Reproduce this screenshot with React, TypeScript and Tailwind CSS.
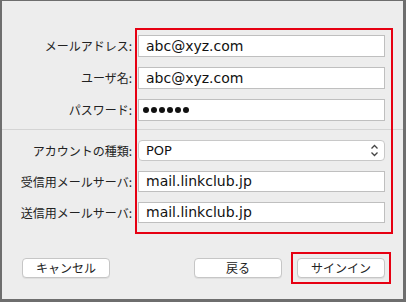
import type { ReactNode } from 'react';

const jp = { fontFamily: '"Noto Sans CJK JP", "Noto Sans", sans-serif' };
const latin = { fontFamily: '"DejaVu Sans", "Noto Sans", sans-serif' };

function Row({ label, children, className = '' }: { label: string; children: ReactNode; className?: string }) {
    return (
        <div className={`flex items-center gap-[6px] ${className}`}>
            <div className="w-[130px] text-right text-[12px] text-[#222] leading-none" style={jp}>
                {label}:
            </div>
            {children}
        </div>
    );
}

function TextField({ value, h = 'h-[22px]' }: { value: string; h?: string }) {
    return (
        <div
            className={`w-[247px] ${h} bg-white border border-[#bfbfbf] flex items-center pl-[7px] text-[14px] text-[#111]`}
            style={latin}
        >
            {value}
        </div>
    );
}

function Button({ label }: { label: string }) {
    return (
        <button
            className="w-[88px] h-[20px] bg-white border border-[#c6c6c6] rounded-[4px] shadow-[0_1px_0_rgba(0,0,0,0.06)] text-[12px] text-[#222] leading-none flex items-center justify-center"
            style={jp}
        >
            {label}
        </button>
    );
}

export default function App() {
    return (
        <div className="relative w-[406px] h-[302px] bg-[#ededed] border-[#6e6e6e] border-l-2 border-t border-r-[3px] border-b-[3px] flex flex-col">
            {/* fields */}
            <div className="flex flex-col pt-[34px]">
                <Row label="メールアドレス">
                    <TextField value="abc@xyz.com" />
                </Row>
                <Row label="ユーザ名" className="mt-[10px]">
                    <TextField value="abc@xyz.com" />
                </Row>
                <Row label="パスワード" className="mt-[10px]">
                    <div className="w-[247px] h-[22px] bg-white border border-[#bfbfbf] flex items-center pl-[4px] gap-[2px]">
                        {[0, 1, 2, 3, 4, 5].map((i) => (
                            <span key={i} className="w-[6px] h-[6px] rounded-full bg-[#111]" />
                        ))}
                    </div>
                </Row>

                <div className="mt-[8px] h-px bg-[#d4d4d4]" />

                <Row label="アカウントの種類" className="mt-[10px]">
                    <div
                        className="w-[247px] h-[21px] bg-white border border-[#c8c8c8] rounded-[4px] flex items-center justify-between pl-[7px] pr-[5px] text-[13px] text-[#111]"
                        style={latin}
                    >
                        <span>POP</span>
                        <svg width="9" height="13" viewBox="0 0 9 13" fill="none" stroke="#444" strokeWidth="1.3">
                            <path d="M1.5 4.5 L4.5 1.5 L7.5 4.5" />
                            <path d="M1.5 8.5 L4.5 11.5 L7.5 8.5" />
                        </svg>
                    </div>
                </Row>
                <Row label="受信用メールサーバ" className="mt-[10px]">
                    <TextField value="mail.linkclub.jp" h="h-[21px]" />
                </Row>
                <Row label="送信用メールサーバ" className="mt-[10px]">
                    <TextField value="mail.linkclub.jp" h="h-[21px]" />
                </Row>
            </div>

            {/* buttons */}
            <div className="mt-[29px] flex items-center pl-[20px] pr-[12px]">
                <Button label="キャンセル" />
                <div className="ml-auto">
                    <Button label="戻る" />
                </div>
                <div className="ml-[9px] border-2 border-[#e60012] p-[4px]">
                    <Button label="サインイン" />
                </div>
            </div>

            {/* annotation over fields */}
            <div className="absolute left-[133px] top-[27px] w-[258px] h-[206px] border-2 border-[#e60012] pointer-events-none" />
        </div>
    );
}
